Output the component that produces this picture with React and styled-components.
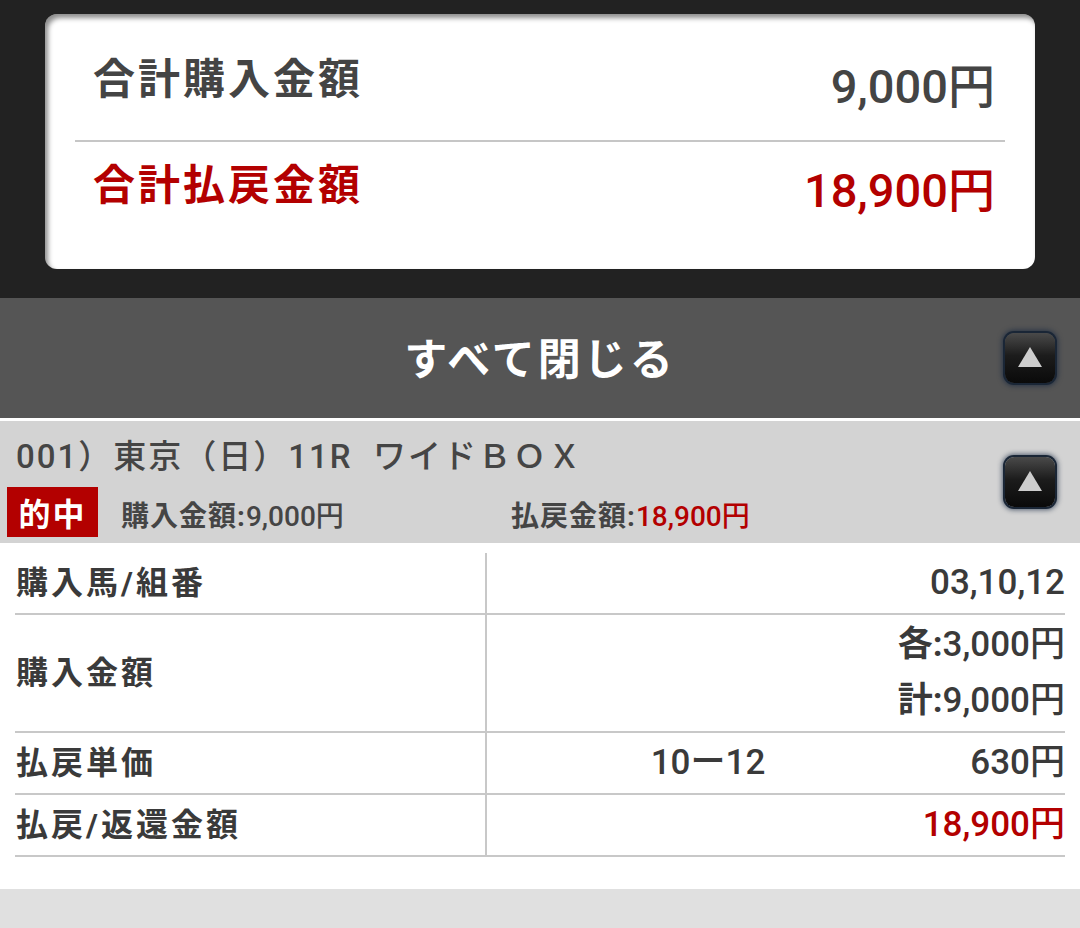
import React from 'react';
import styled, { createGlobalStyle } from 'styled-components';

const GlobalStyle = createGlobalStyle`
  html, body {
    margin: 0;
    padding: 0;
  }
  body {
    background: #e0e0e0;
    font-family: Roboto, "Noto Sans CJK JP", sans-serif;
    color: #444;
  }
`;

const RED = '#b30000';

const summary = [
  { label: '合計購入金額', value: '9,000円', accent: false, height: 126, labelDrop: 6, valueDrop: 20 },
  { label: '合計払戻金額', value: '18,900円', accent: true, height: 90, labelDrop: 0, valueDrop: 10 },
];

function App() {
  return (
    <>
      <GlobalStyle />
      <Page>
        <TopArea>
          <SummaryCard>
            {summary.map((row, i) => (
              <SummaryRow key={row.label} $height={row.height} $divided={i > 0} $accent={row.accent}>
                <SummaryLabel $drop={row.labelDrop}>{row.label}</SummaryLabel>
                <SummaryValue $drop={row.valueDrop}>{row.value}</SummaryValue>
              </SummaryRow>
            ))}
          </SummaryCard>
        </TopArea>

        <CloseAllBar>
          <CloseAllText>すべて閉じる</CloseAllText>
          <ToggleButton aria-label="閉じる">
            <Arrow />
          </ToggleButton>
        </CloseAllBar>

        <TicketHeader>
          <HeaderInfo>
            <TicketTitle>{'001）東京（日）11R  ワイドＢＯＸ'}</TicketTitle>
            <SubLine>
              <HitBadge>的中</HitBadge>
              <SubItem $width={390}>
                購入金額:<Num>9,000円</Num>
              </SubItem>
              <SubItem>
                払戻金額:<Num $accent>18,900円</Num>
              </SubItem>
            </SubLine>
          </HeaderInfo>
          <ToggleButton aria-label="閉じる">
            <Arrow />
          </ToggleButton>
        </TicketHeader>

        <DetailSection>
          <DetailGrid>
            <LabelCell>購入馬/組番</LabelCell>
            <ValueCell $span={2}>
              <Num>03,10,12</Num>
            </ValueCell>

            <LabelCell>購入金額</LabelCell>
            <ValueCell $span={2}>
              <ValueLine>各:<Num>3,000円</Num></ValueLine>
              <ValueLine>計:<Num>9,000円</Num></ValueLine>
            </ValueCell>

            <LabelCell>払戻単価</LabelCell>
            <ValueCell $align="center">
              <Num>10ー12</Num>
            </ValueCell>
            <ValueCell>
              <Num>630円</Num>
            </ValueCell>

            <LabelCell>払戻/返還金額</LabelCell>
            <ValueCell $span={2}>
              <Num $accent>18,900円</Num>
            </ValueCell>
          </DetailGrid>
        </DetailSection>
      </Page>
    </>
  );
}

const Page = styled.div`
  width: 1080px;
  min-height: 928px;
  background: #e0e0e0;
`;

const TopArea = styled.div`
  background: #222;
  padding: 14px 45px 29px;
`;

const SummaryCard = styled.div`
  background: #fff;
  border-radius: 12px;
  box-shadow: inset 3px 4px 5px rgba(0, 0, 0, 0.45);
  padding: 0 30px 39px;
`;

const SummaryRow = styled.div`
  display: flex;
  justify-content: space-between;
  align-items: center;
  height: ${(p) => p.$height}px;
  box-sizing: border-box;
  padding: 0 10px 0 18px;
  border-top: ${(p) => (p.$divided ? '2px solid #c6c6c6' : 'none')};
  color: ${(p) => (p.$accent ? RED : '#444')};
`;

const SummaryLabel = styled.div`
  font-size: 42px;
  font-weight: 700;
  letter-spacing: 3px;
  line-height: 1.2;
  margin-top: ${(p) => p.$drop}px;
`;

const SummaryValue = styled.div`
  font-size: 47px;
  font-weight: 500;
  line-height: 1.2;
  margin-top: ${(p) => p.$drop}px;
`;

const CloseAllBar = styled.div`
  display: grid;
  grid-template-columns: 1fr auto 1fr;
  align-items: center;
  height: 120px;
  padding: 0 25px;
  background: #555;
`;

const CloseAllText = styled.div`
  grid-column: 2;
  padding-top: 6px;
  color: #fff;
  font-size: 43px;
  font-weight: 700;
  letter-spacing: 3px;
  line-height: 1.2;
`;

const ToggleButton = styled.button`
  grid-column: 3;
  justify-self: end;
  flex: none;
  display: flex;
  align-items: center;
  justify-content: center;
  width: 50px;
  height: 50px;
  padding: 0;
  border: none;
  border-radius: 9px;
  background: linear-gradient(#4a4a4a 0%, #1c1c1c 45%, #0a0a0a 100%);
  box-shadow: 0 0 0 2px #1a2636, 0 0 5px 3px rgba(18, 36, 62, 0.65);
  cursor: pointer;
`;

const Arrow = styled.span`
  width: 0;
  height: 0;
  border-left: 12px solid transparent;
  border-right: 12px solid transparent;
  border-bottom: 20px solid #cdcdcd;
  margin-top: -2px;
`;

const TicketHeader = styled.div`
  display: flex;
  align-items: center;
  height: 122px;
  box-sizing: content-box;
  padding: 0 25px 0 7px;
  border-top: 3px solid #fff;
  background: #d3d3d3;
`;

const HeaderInfo = styled.div`
  flex: 1;
  display: flex;
  flex-direction: column;
  padding-top: 16px;
  padding-bottom: 6px;
`;

const TicketTitle = styled.div`
  margin-left: 9px;
  font-size: 33px;
  font-weight: 500;
  letter-spacing: 2px;
  line-height: 40px;
  white-space: pre;
  color: #454545;
`;

const SubLine = styled.div`
  display: flex;
  align-items: center;
  margin-top: 10px;
  height: 50px;
`;

const HitBadge = styled.div`
  display: flex;
  align-items: center;
  justify-content: center;
  width: 91px;
  height: 50px;
  margin-right: 23px;
  background: ${RED};
  color: #fff;
  font-size: 32px;
  font-weight: 700;
  letter-spacing: 2px;
`;

const SubItem = styled.div`
  width: ${(p) => (p.$width ? `${p.$width}px` : 'auto')};
  padding-top: 3px;
  font-size: 28px;
  font-weight: 700;
  letter-spacing: 1px;
  color: #454545;
`;

const Num = styled.span`
  font-weight: 500;
  letter-spacing: 0;
  color: ${(p) => (p.$accent ? RED : 'inherit')};
`;

const DetailSection = styled.div`
  background: #fff;
  padding: 10px 15px 32px;
`;

const DetailGrid = styled.div`
  display: grid;
  grid-template-columns: 472px 442px 1fr;
`;

const Cell = styled.div`
  padding: 2px 0;
  line-height: 56px;
  border-bottom: 2px solid #c8c8c8;
  color: #3a3a3a;
`;

const LabelCell = styled(Cell)`
  display: flex;
  align-items: center;
  padding-left: 1px;
  border-right: 2px solid #c8c8c8;
  font-size: 32px;
  font-weight: 700;
  letter-spacing: 3px;
`;

const ValueCell = styled(Cell)`
  grid-column: span ${(p) => p.$span || 1};
  text-align: ${(p) => p.$align || 'right'};
  font-size: 35px;
  font-weight: 700;
`;

const ValueLine = styled.div``;

export default App;
